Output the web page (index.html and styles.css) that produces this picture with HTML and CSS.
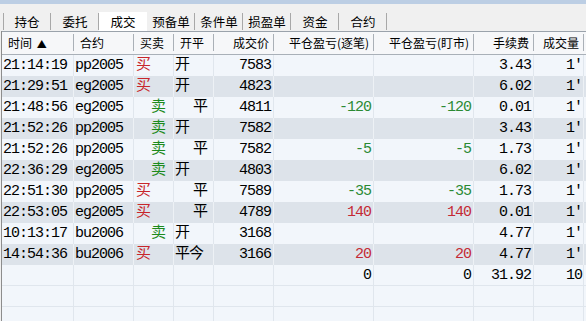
FILE: index.html
```html
<!DOCTYPE html>
<html lang="zh-CN">
<head>
    <meta charset="UTF-8">
    <title>成交</title>
    <link rel="stylesheet" href="styles.css">
</head>
<body>
    <div class="topbar"></div>

    <!-- 页签 -->
    <div class="tabs">
        <div class="tab">持仓</div>
        <div class="tab">委托</div>
        <div class="tab tab--active">成交</div>
        <div class="tab">预备单</div>
        <div class="tab">条件单</div>
        <div class="tab">损盈单</div>
        <div class="tab">资金</div>
        <div class="tab">合约</div>
    </div>

    <!-- 成交列表 -->
    <div class="grid">
        <div class="row row--head">
            <div class="cell">时间 <span class="sort">▲</span></div>
            <div class="cell">合约</div>
            <div class="cell">买卖</div>
            <div class="cell">开平</div>
            <div class="cell num">成交价</div>
            <div class="cell num">平仓盈亏(逐笔)</div>
            <div class="cell num">平仓盈亏(盯市)</div>
            <div class="cell num">手续费</div>
            <div class="cell num">成交量</div>
            <div class="cell"></div>
        </div>

        <div class="row">
            <div class="cell">21:14:19</div><div class="cell">pp2005</div>
            <div class="cell buy">买</div><div class="cell">开</div>
            <div class="cell num">7583</div><div class="cell num"></div><div class="cell num"></div>
            <div class="cell num">3.43</div><div class="cell vol">1'</div><div class="cell"></div>
        </div>
        <div class="row row--alt">
            <div class="cell">21:29:51</div><div class="cell">eg2005</div>
            <div class="cell buy">买</div><div class="cell">开</div>
            <div class="cell num">4823</div><div class="cell num"></div><div class="cell num"></div>
            <div class="cell num">6.02</div><div class="cell vol">1'</div><div class="cell"></div>
        </div>
        <div class="row">
            <div class="cell">21:48:56</div><div class="cell">eg2005</div>
            <div class="cell sell">卖</div><div class="cell close">平</div>
            <div class="cell num">4811</div><div class="cell num loss">-120</div><div class="cell num loss">-120</div>
            <div class="cell num">0.01</div><div class="cell vol">1'</div><div class="cell"></div>
        </div>
        <div class="row row--alt">
            <div class="cell">21:52:26</div><div class="cell">pp2005</div>
            <div class="cell sell">卖</div><div class="cell">开</div>
            <div class="cell num">7582</div><div class="cell num"></div><div class="cell num"></div>
            <div class="cell num">3.43</div><div class="cell vol">1'</div><div class="cell"></div>
        </div>
        <div class="row">
            <div class="cell">21:52:26</div><div class="cell">pp2005</div>
            <div class="cell sell">卖</div><div class="cell close">平</div>
            <div class="cell num">7582</div><div class="cell num loss">-5</div><div class="cell num loss">-5</div>
            <div class="cell num">1.73</div><div class="cell vol">1'</div><div class="cell"></div>
        </div>
        <div class="row row--alt">
            <div class="cell">22:36:29</div><div class="cell">eg2005</div>
            <div class="cell sell">卖</div><div class="cell">开</div>
            <div class="cell num">4803</div><div class="cell num"></div><div class="cell num"></div>
            <div class="cell num">6.02</div><div class="cell vol">1'</div><div class="cell"></div>
        </div>
        <div class="row">
            <div class="cell">22:51:30</div><div class="cell">pp2005</div>
            <div class="cell buy">买</div><div class="cell close">平</div>
            <div class="cell num">7589</div><div class="cell num loss">-35</div><div class="cell num loss">-35</div>
            <div class="cell num">1.73</div><div class="cell vol">1'</div><div class="cell"></div>
        </div>
        <div class="row row--alt">
            <div class="cell">22:53:05</div><div class="cell">eg2005</div>
            <div class="cell buy">买</div><div class="cell close">平</div>
            <div class="cell num">4789</div><div class="cell num gain">140</div><div class="cell num gain">140</div>
            <div class="cell num">0.01</div><div class="cell vol">1'</div><div class="cell"></div>
        </div>
        <div class="row">
            <div class="cell">10:13:17</div><div class="cell">bu2006</div>
            <div class="cell sell">卖</div><div class="cell">开</div>
            <div class="cell num">3168</div><div class="cell num"></div><div class="cell num"></div>
            <div class="cell num">4.77</div><div class="cell vol">1'</div><div class="cell"></div>
        </div>
        <div class="row row--alt">
            <div class="cell">14:54:36</div><div class="cell">bu2006</div>
            <div class="cell buy">买</div><div class="cell">平今</div>
            <div class="cell num">3166</div><div class="cell num gain">20</div><div class="cell num gain">20</div>
            <div class="cell num">4.77</div><div class="cell vol">1'</div><div class="cell"></div>
        </div>

        <!-- 合计 -->
        <div class="row row--empty">
            <div class="cell"></div><div class="cell"></div>
            <div class="cell"></div><div class="cell"></div>
            <div class="cell num"></div><div class="cell num">0</div><div class="cell num">0</div>
            <div class="cell num">31.92</div><div class="cell vol">10</div><div class="cell"></div>
        </div>
        <div class="row row--empty">
            <div class="cell"></div><div class="cell"></div><div class="cell"></div><div class="cell"></div><div class="cell"></div>
            <div class="cell"></div><div class="cell"></div><div class="cell"></div><div class="cell"></div><div class="cell"></div>
        </div>
        <div class="row row--empty">
            <div class="cell"></div><div class="cell"></div><div class="cell"></div><div class="cell"></div><div class="cell"></div>
            <div class="cell"></div><div class="cell"></div><div class="cell"></div><div class="cell"></div><div class="cell"></div>
        </div>
    </div>
</body>
</html>
```

FILE: styles.css
```css
* {
    margin: 0;
    padding: 0;
    box-sizing: border-box;
}

body {
    width: 586px;
    height: 321px;
    overflow: hidden;
    background: #f0f0f0;
    font-family: "Noto Sans CJK SC", sans-serif;
    color: #000;
}

.topbar {
    height: 4px;
    background: #bccee4;
}

/* 页签 */
.tabs {
    display: flex;
    height: 19px;
    margin-top: 8px;
    padding-left: 3px;
}

.tab {
    width: 48px;
    font-size: 12.5px;
    line-height: 19px;
    text-align: center;
    background: linear-gradient(#a8a8a8, #a8a8a8) no-repeat right 1px / 1px 17px;
}

.tab:first-child {
    background:
        linear-gradient(#a8a8a8, #a8a8a8) no-repeat left 1px / 1px 17px,
        linear-gradient(#a8a8a8, #a8a8a8) no-repeat right 1px / 1px 17px;
}

.tab--active {
    background: #fff;
}

/* 表格 */
.grid {
    margin-left: 1px;
    border-left: 1px solid #8d8d8d;
    background: #f2f6fb;
}

.row {
    display: grid;
    grid-template-columns: 72px 60px 40px 40px 60px 100px 100px 60px 50px 1fr;
    height: 21px;
    font-family: "Liberation Mono", "Noto Sans CJK SC", monospace;
    font-size: 15px;
    letter-spacing: -1px;
    line-height: 21px;
}

.row--alt {
    background: #dde3ea;
}

.cell {
    padding: 0 2px 0 1px;
    border-right: 1px solid #e0e6ed;
    white-space: nowrap;
    overflow: hidden;
}

.row--alt .cell {
    border-right-color: #edf1f5;
}

.row--empty .cell {
    border-bottom: 1px solid #e0e6ed;
}

.row--head {
    height: 24px;
    border-top: 1px solid #9aa2ab;
    border-bottom: 1px solid #a9b0b8;
    background: #f6f7f9;
    font-family: "Noto Sans CJK SC", sans-serif;
    font-size: 12px;
    letter-spacing: 0;
    line-height: 22px;
}

.row--head .cell {
    padding: 0 5px 0 6px;
    border-right: none;
    background: linear-gradient(#aab0b7, #aab0b7) no-repeat right 2px / 1px 17px;
}

.row--head .cell:last-child {
    background: none;
}

.sort {
    font-size: 10px;
    margin-left: 2px;
}

.num {
    text-align: right;
}

.vol {
    padding-left: 32px;
}

.buy {
    color: #c8262b;
    padding-left: 2px;
}

.sell {
    color: #1c8a1c;
    padding-left: 17px;
}

.close {
    padding-left: 19px;
}

.loss {
    color: #2b8a34;
}

.gain {
    color: #c42a35;
}
```
